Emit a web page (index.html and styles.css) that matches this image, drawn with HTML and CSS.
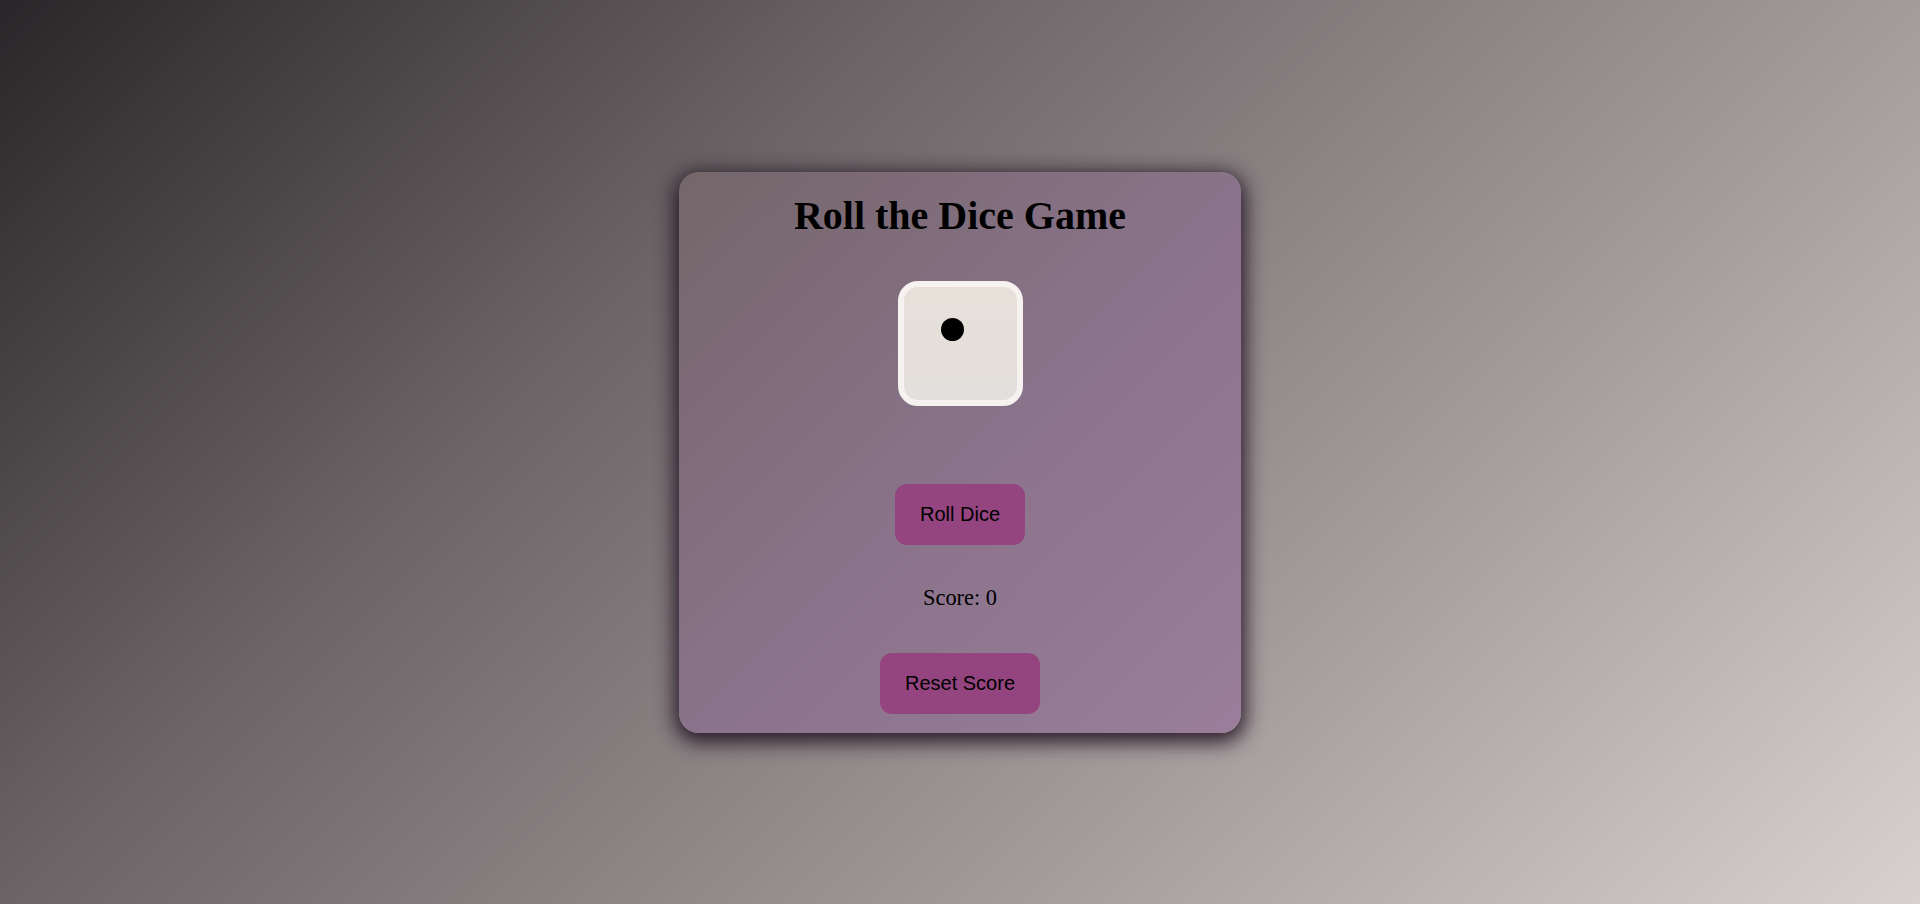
FILE: index.html
```html
<!DOCTYPE html>
<html lang="en">
<head>
<meta charset="UTF-8">
<title>Roll the Dice Game</title>
<link rel="stylesheet" href="styles.css">
</head>
<body>
  <main class="game">
    <h1 class="title">Roll the Dice Game</h1>
    <div class="dice">
      <span class="pip"></span>
    </div>
    <button class="btn btn-roll">Roll Dice</button>
    <p class="score">Score: 0</p>
    <button class="btn btn-reset">Reset Score</button>
  </main>
</body>
</html>
```

FILE: styles.css
```css
html, body {
  margin: 0;
  padding: 0;
}

body {
  height: 100vh;
  display: flex;
  align-items: center;
  justify-content: center;
  background: linear-gradient(135deg, #2a2528 0%, #6a6466 32%, #a39c9c 68%, #d9d1d1 100%);
  font-family: "Liberation Serif", "Times New Roman", serif;
  color: #000;
}

.game {
  box-sizing: border-box;
  width: 562px;
  padding: 21px 20px 19px;
  border-radius: 20px;
  background: linear-gradient(135deg, #746669 0%, #89738a 50%, #9a7e9b 100%);
  box-shadow: 0 5px 20px 4px rgba(34, 14, 32, 0.92);
  display: flex;
  flex-direction: column;
  align-items: center;
}

.title {
  margin: 0;
  font-size: 40px;
  font-weight: bold;
  line-height: 46px;
  text-align: center;
}

.dice {
  position: relative;
  box-sizing: border-box;
  width: 125px;
  height: 125px;
  margin-top: 42px;
  border: 6px solid #f6f2ef;
  border-radius: 20px;
  background: linear-gradient(180deg, #e7e0d9 0%, #e3dfdc 100%);
}

.pip {
  position: absolute;
  left: 37px;
  top: 31px;
  width: 23px;
  height: 23px;
  border-radius: 50%;
  background: #000;
}

.btn {
  font-family: "Liberation Sans", Arial, sans-serif;
  font-size: 20px;
  line-height: 23px;
  padding: 19px 25px;
  border: none;
  border-radius: 12px;
  background: #94457f;
  color: #000;
  cursor: pointer;
}

.btn-roll {
  margin-top: 78px;
}

.score {
  margin: 40px 0 0;
  font-size: 22.4px;
  line-height: 26px;
}

.btn-reset {
  margin-top: 42px;
}
```
